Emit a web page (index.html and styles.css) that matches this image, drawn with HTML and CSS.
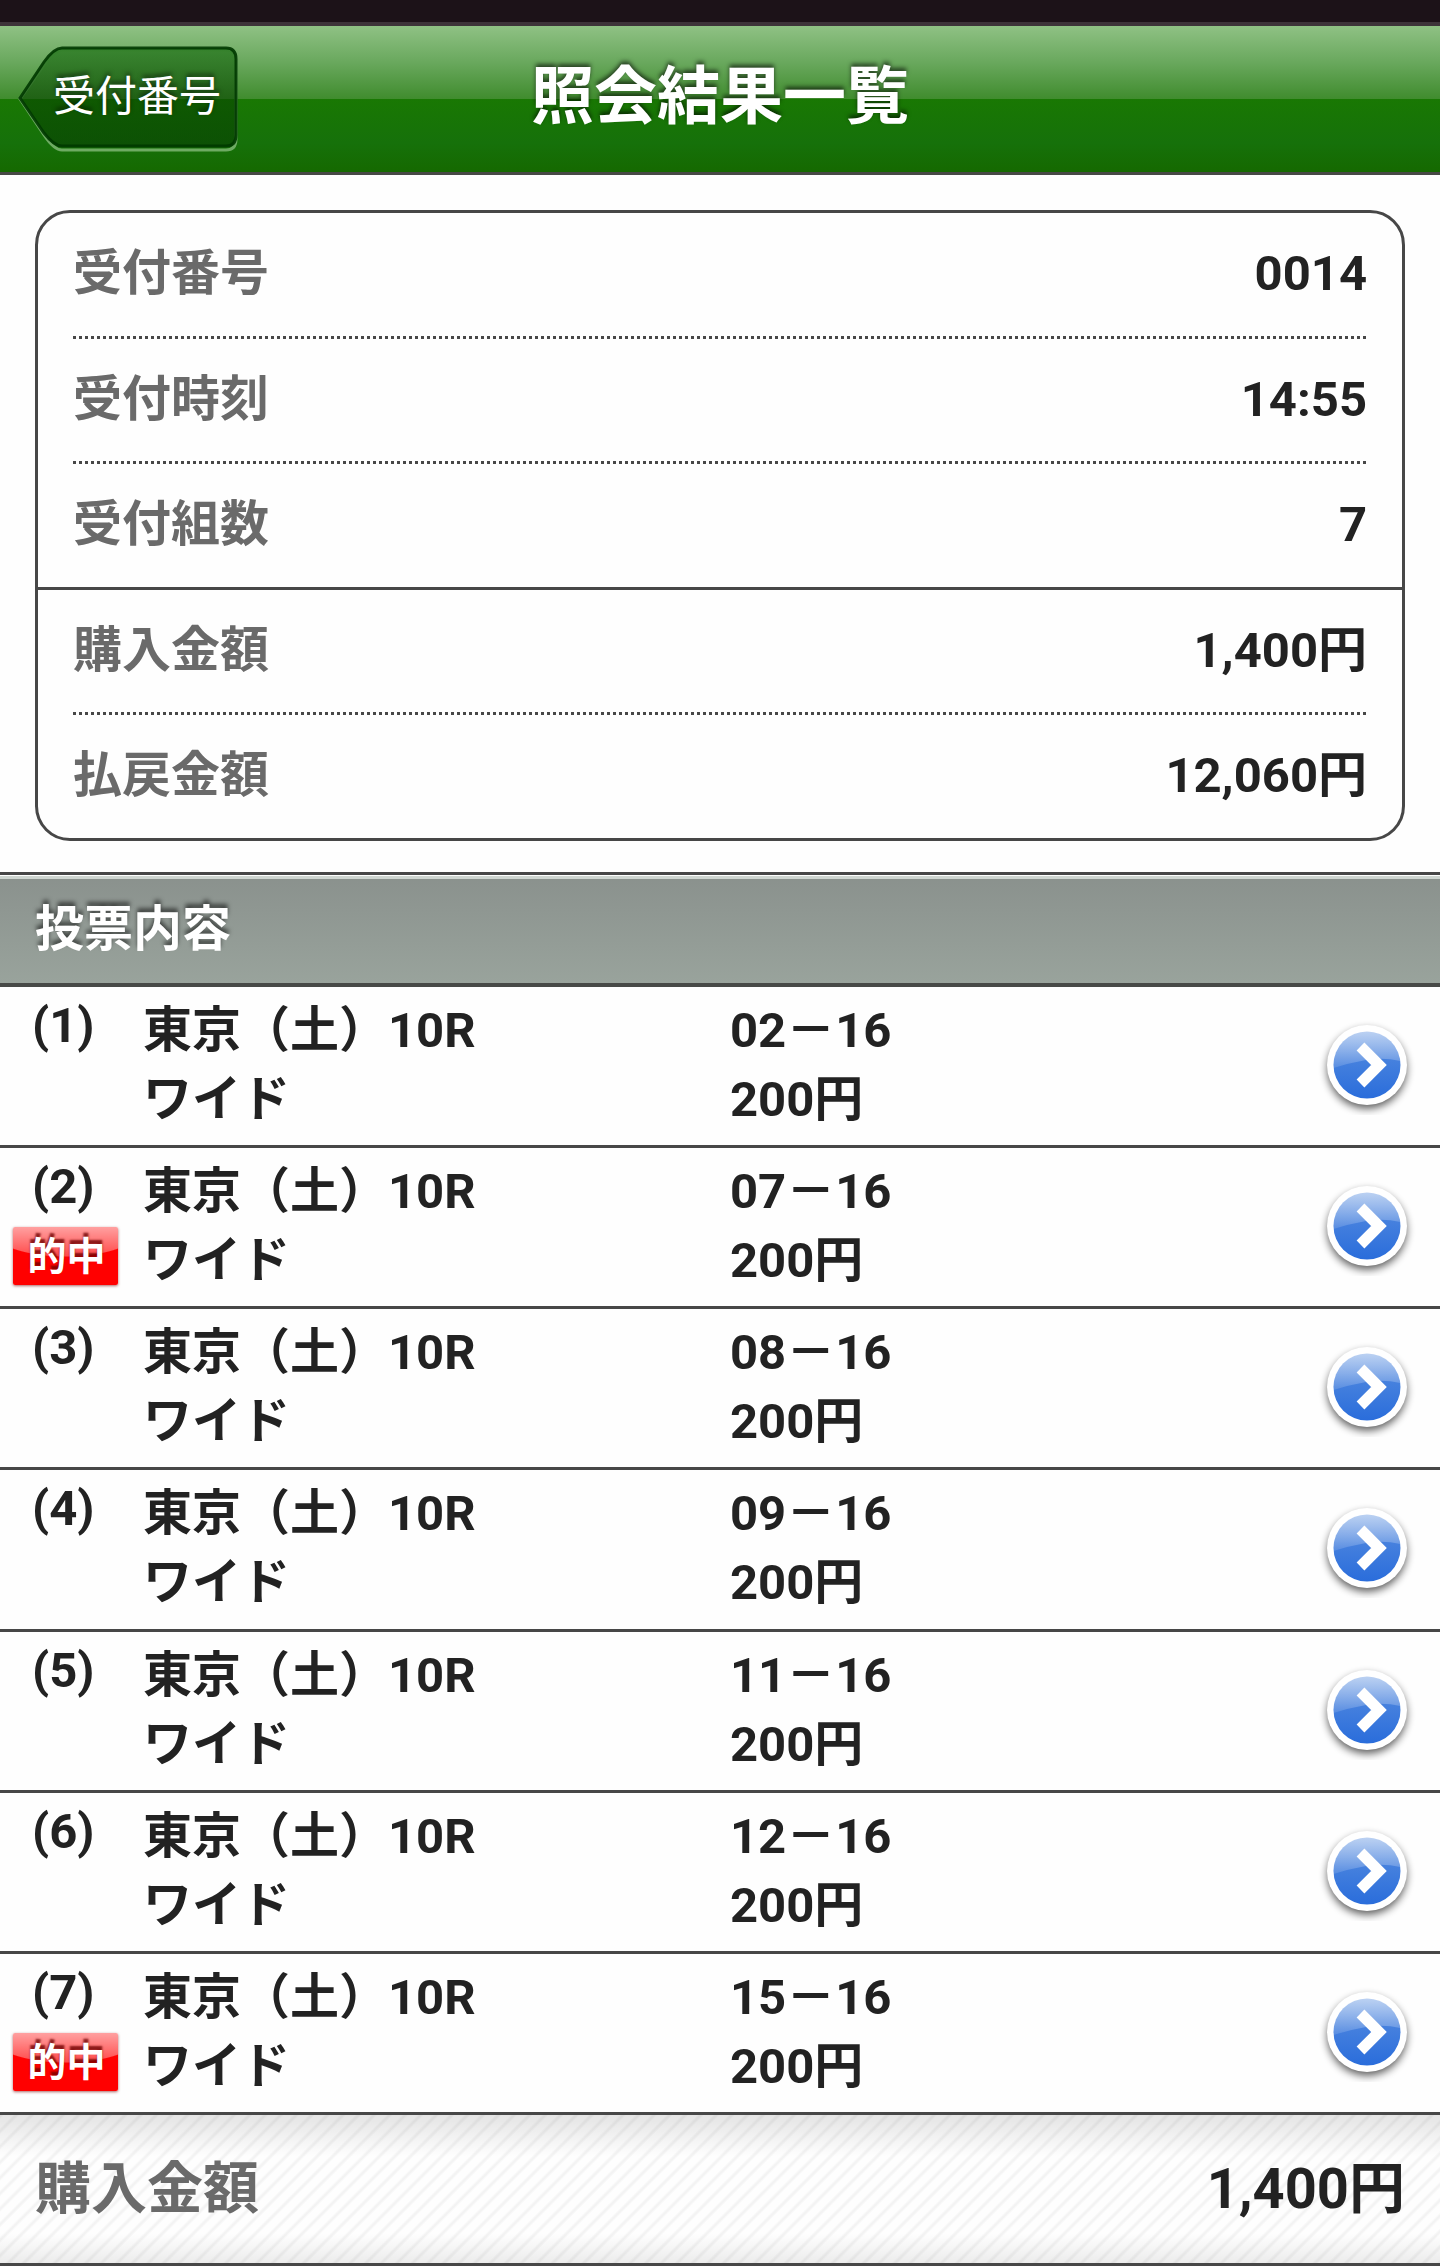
FILE: index.html
```
<!DOCTYPE html>
<html lang="ja">
<head>
<meta charset="utf-8">
<title>照会結果一覧</title>
<link rel="stylesheet" href="styles.css">
</head>
<body>
<svg class="defs" width="0" height="0" aria-hidden="true">
  <defs>
    <linearGradient id="ball" x1="0" y1="0" x2="0" y2="1"><stop offset="0" stop-color="#5a8fe0"/><stop offset="1" stop-color="#2a6ddb"/></linearGradient>
    <linearGradient id="gloss" x1="0" y1="0" x2="0" y2="1"><stop offset="0" stop-color="#fff" stop-opacity=".6"/><stop offset="1" stop-color="#fff" stop-opacity=".12"/></linearGradient>
    <linearGradient id="backfill" x1="0" y1="0" x2="0" y2="1"><stop offset="0" stop-color="#106808" stop-opacity=".6"/><stop offset=".51" stop-color="#064000" stop-opacity=".55"/><stop offset="1" stop-color="#043400" stop-opacity=".52"/></linearGradient>
    <filter id="soft" x="-30%" y="-30%" width="160%" height="160%"><feGaussianBlur stdDeviation="4"/></filter>
    <symbol id="go" viewBox="0 0 100 100">
      <circle cx="50" cy="54" r="39.500" fill="#000" opacity=".65" filter="url(#soft)"/>
      <circle cx="50" cy="50" r="40" fill="#fff"/>
      <circle cx="50" cy="50" r="33.500" fill="url(#ball)"/>
      <path d="M16.500 53A33.500 33.500 0 0 1 83.300 46Q66 42 49 45T16.500 53Z" fill="url(#gloss)"/>
      <path d="M43.500 31.500 62 50 43.500 68.500" fill="none" stroke="#fff" stroke-width="11"/>
    </symbol>
  </defs>
</svg>
<div class="status"></div>
<header class="bar">
  <a class="back">
    <svg class="back-shape" viewBox="0 0 222 108" aria-hidden="true">
      <path d="M2 54 26 20Q36 5 44 5H208Q218 5 218 16V94Q218 105 208 105H44Q36 105 26 90Z" fill="none" stroke="#6eab63" stroke-width="3"/>
      <path d="M2 53 26 17Q36 3 44 3H208Q218 3 218 14V90Q218 101 208 101H44Q36 101 26 88Z" fill="url(#backfill)" stroke="#003800" stroke-opacity=".9" stroke-width="3"/>
    </svg>
    <span class="back-text">受付番号</span>
  </a>
  <h1 class="title">照会結果一覧</h1>
</header>
<main>
  <dl class="card">
    <div class="item"><dt>受付番号</dt><dd>0014</dd></div>
    <div class="item"><dt>受付時刻</dt><dd>14:55</dd></div>
    <div class="item last"><dt>受付組数</dt><dd>7</dd></div>
    <div class="item"><dt>購入金額</dt><dd>1,400円</dd></div>
    <div class="item last"><dt>払戻金額</dt><dd>12,060円</dd></div>
  </dl>
  <h2 class="section">投票内容</h2>
  <ul class="bets">
    <li class="bet"><div class="no">(1)</div><div class="race">東京（土）10R<br>ワイド</div><div class="pick">02－16<br>200円</div><svg class="go"><use href="#go"/></svg></li>
    <li class="bet"><div class="no">(2)<span class="hit">的中</span></div><div class="race">東京（土）10R<br>ワイド</div><div class="pick">07－16<br>200円</div><svg class="go"><use href="#go"/></svg></li>
    <li class="bet"><div class="no">(3)</div><div class="race">東京（土）10R<br>ワイド</div><div class="pick">08－16<br>200円</div><svg class="go"><use href="#go"/></svg></li>
    <li class="bet"><div class="no">(4)</div><div class="race">東京（土）10R<br>ワイド</div><div class="pick">09－16<br>200円</div><svg class="go"><use href="#go"/></svg></li>
    <li class="bet"><div class="no">(5)</div><div class="race">東京（土）10R<br>ワイド</div><div class="pick">11－16<br>200円</div><svg class="go"><use href="#go"/></svg></li>
    <li class="bet"><div class="no">(6)</div><div class="race">東京（土）10R<br>ワイド</div><div class="pick">12－16<br>200円</div><svg class="go"><use href="#go"/></svg></li>
    <li class="bet"><div class="no">(7)<span class="hit">的中</span></div><div class="race">東京（土）10R<br>ワイド</div><div class="pick">15－16<br>200円</div><svg class="go"><use href="#go"/></svg></li>
  </ul>
</main>
<footer class="total"><span class="total-label">購入金額</span><span>1,400円</span></footer>
</body>
</html>
```
FILE: styles.css
```
* { box-sizing: border-box; }
body {
  margin: 0;
  background: #fefefe;
  color: #222;
  font-family: Roboto, "Noto Sans CJK JP", sans-serif;
  font-size: 49px;
  font-weight: 700;
}
h1, h2, dl, dd, ul { margin: 0; padding: 0; font-size: inherit; }
.defs { display: block; }
.status { height: 26px; background: #1c1218; border-bottom: 4px solid #3d3439; }
.bar {
  display: grid;
  grid-template-columns: 240px 1fr 240px;
  height: 149px;
  border-bottom: 3px solid #474945;
  background: linear-gradient(#8fc184 0, #69a85d 50%, #408c2e 100%) 0 0 / 100% 73px no-repeat,
    linear-gradient(#197803, #16710a 60%, #156900) 0 73px / 100% 73px no-repeat;
}
.back { position: relative; display: block; margin: 19px 0 0 18px; width: 222px; height: 108px; }
.back-shape { display: block; width: 222px; height: 108px; }
.back-text {
  position: absolute;
  left: 35px;
  top: 22px;
  font-size: 42px;
  line-height: 60px;
  font-weight: 400;
  color: #fff;
  white-space: nowrap;
  text-shadow: 0 -3px 4px rgba(0, 0, 0, .5);
}
.title {
  font-size: 63px;
  line-height: 90px;
  padding-top: 26px;
  text-align: center;
  color: #fff;
  text-shadow: 0 -3px 4px rgba(0, 0, 0, .6);
}
.card {
  margin: 35px 35px 31px;
  height: 631px;
  border: 3px solid #474747;
  border-radius: 35px;
  display: grid;
  grid-template-rows: 126px 125px 126px 125px 123px;
}
.item {
  display: flex;
  justify-content: space-between;
  margin: 0 35px;
  line-height: 70px;
  padding-top: 26px;
  background: repeating-linear-gradient(90deg, #474747 0 3px, transparent 3px 6px) 0 100% / 100% 3px no-repeat;
}
.item dt { color: #6a6a6a; }
.item.last { margin: 0; padding-left: 35px; padding-right: 35px; background: none; border-bottom: 3px solid #474747; }
.item.last:last-child { border-bottom: 0; }
.section {
  height: 115px;
  padding: 20px 35px 0;
  line-height: 70px;
  color: #fff;
  border-top: 3px solid #474747;
  border-bottom: 4px solid #474947;
  background: linear-gradient(#fff 0 1px, #cfd6d1 1px 4px, transparent 4px), linear-gradient(#8a918d, #99a39c);
  text-shadow: 0 -4px 4px rgba(0, 0, 0, .55);
}
.bets { list-style: none; }
.bet {
  display: grid;
  grid-template-columns: 143px 587px 1fr 100px;
  height: 161.14px;
  padding-right: 23px;
  border-bottom: 3px solid #474747;
  line-height: 69px;
}
.no { padding: 4px 0 0 32px; }
.race, .pick { padding-top: 9px; }
.hit {
  display: block;
  margin: 6px 0 0 -19px;
  width: 105px;
  height: 58px;
  padding: 3px 0 0 2px;
  border-radius: 2px;
  text-align: center;
  font-size: 39px;
  line-height: 54px;
  color: #fff;
  background: radial-gradient(ellipse 78px 30px at 50% 0, transparent 97%, red 100%), linear-gradient(#ffa0a0, #ff4848 30px);
  box-shadow: 0 1px 3px rgba(120, 0, 0, .6);
  text-shadow: 0 -4px 2px rgba(110, 0, 0, .8);
}
.go { width: 100px; height: 100px; margin-top: 28px; overflow: visible; }
.total {
  display: flex;
  justify-content: space-between;
  height: 151px;
  padding: 32px 35px 0;
  font-size: 56px;
  line-height: 84px;
  border-bottom: 3px solid #474747;
  background: linear-gradient(rgba(0,0,0,.1), transparent 28%, transparent 80%, rgba(0,0,0,.07)),
    repeating-linear-gradient(135deg, #f3f3f3 0 1px, #fefefe 3px 9px, #f3f3f3 11px);
}
.total-label { color: #6a6a6a; }
```
